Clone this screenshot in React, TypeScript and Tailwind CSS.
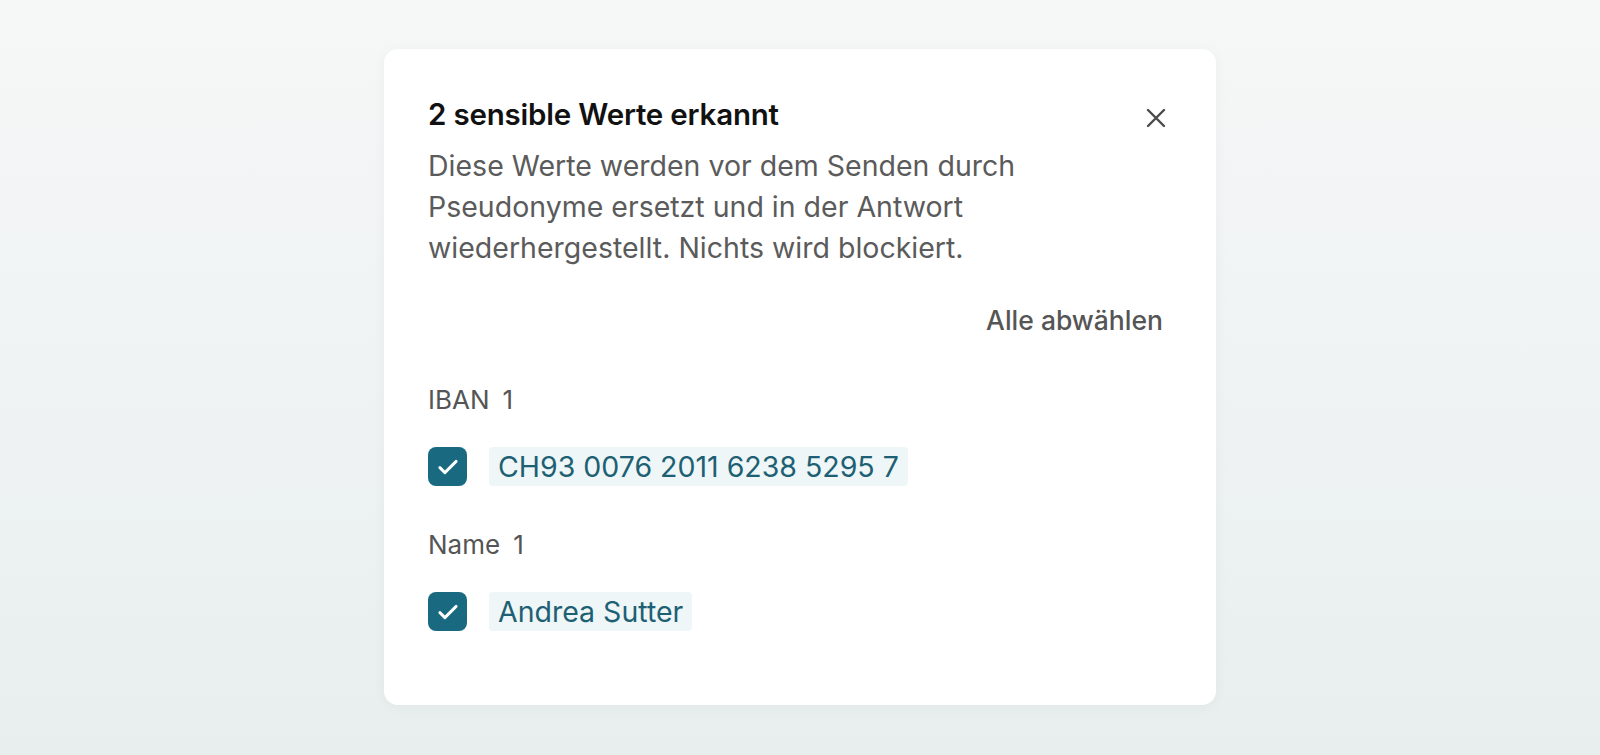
import { useState } from "react";

type Item = { id: string; label: string; value: string };

const GROUPS: { name: string; items: Item[] }[] = [
  { name: "IBAN", items: [{ id: "iban-1", label: "IBAN", value: "CH93 0076 2011 6238 5295 7" }] },
  { name: "Name", items: [{ id: "name-1", label: "Name", value: "Andrea Sutter" }] },
];

function CheckBox({ checked, onChange }: { checked: boolean; onChange: () => void }) {
  return (
    <button
      onClick={onChange}
      className={`w-[39px] h-[39px] rounded-[8px] flex items-center justify-center shrink-0 ${
        checked ? "bg-[#196a80]" : "bg-white border-2 border-[#9aa5a8]"
      }`}
    >
      {checked && (
        <svg width="30" height="30" viewBox="0 0 24 24" fill="none" stroke="white" strokeWidth="2.3" strokeLinecap="round" strokeLinejoin="round">
          <path d="M5.5 12.5l4 4L18.5 7.5" />
        </svg>
      )}
    </button>
  );
}

export default function App() {
  const [selected, setSelected] = useState<Record<string, boolean>>({ "iban-1": true, "name-1": true });

  const toggle = (id: string) => setSelected((s) => ({ ...s, [id]: !s[id] }));
  const clearAll = () => setSelected({ "iban-1": false, "name-1": false });

  return (
    <div
      className="min-h-screen w-full flex justify-center pt-[49px] bg-gradient-to-b from-[#f6f7f7] via-[#eff3f4] to-[#e8eeee]"
      style={{ fontFamily: "Inter, 'Noto Sans', sans-serif" }}
    >
      <div className="w-[832px] h-[656px] bg-white rounded-[14px] shadow-[0_2px_14px_rgba(0,0,0,0.04)] pt-[48px] px-[44px]">
        <div className="flex items-start justify-between gap-6">
          <div className="flex-1">
            <h2 className="text-[29.5px] leading-[34px] font-semibold text-[#111] tracking-[-0.2px]">2 sensible Werte erkannt</h2>
            <p className="mt-[14px] text-[28.5px] leading-[41px] text-[#5b5b5b]">
              Diese Werte werden vor dem Senden durch Pseudonyme ersetzt und in der Antwort wiederhergestellt. Nichts wird blockiert.
            </p>
          </div>
          <button className="w-[36px] h-[36px] mt-[3px] -mr-[2px] flex items-center justify-center text-[#4a4a4a]">
            <svg width="32" height="32" viewBox="0 0 24 24" fill="none" stroke="currentColor" strokeWidth="1.8" strokeLinecap="round">
              <path d="M6 6l12 12M18 6L6 18" />
            </svg>
          </button>
        </div>

        <div className="flex justify-end mt-[36px]">
          <button onClick={clearAll} className="text-[26.5px] leading-[32px] font-medium text-[#555] pr-[9px]">
            Alle abwählen
          </button>
        </div>

        <div className="mt-[48px] flex flex-col gap-[43px]">
          {GROUPS.map((g) => (
            <div key={g.name}>
              <div className="text-[26px] leading-[32px] text-[#555] flex gap-[13px]">
                <span>{g.name}</span>
                <span>{g.items.length}</span>
              </div>
              <div className="mt-[31px] flex flex-col gap-4">
                {g.items.map((it) => (
                  <div key={it.id} className="flex items-center gap-[22px]">
                    <CheckBox checked={!!selected[it.id]} onChange={() => toggle(it.id)} />
                    <span className="bg-[#eef6f8] text-[#1d6073] text-[28.5px] leading-[39px] px-[9px] rounded-[4px]">
                      {it.value}
                    </span>
                  </div>
                ))}
              </div>
            </div>
          ))}
        </div>
      </div>
    </div>
  );
}
